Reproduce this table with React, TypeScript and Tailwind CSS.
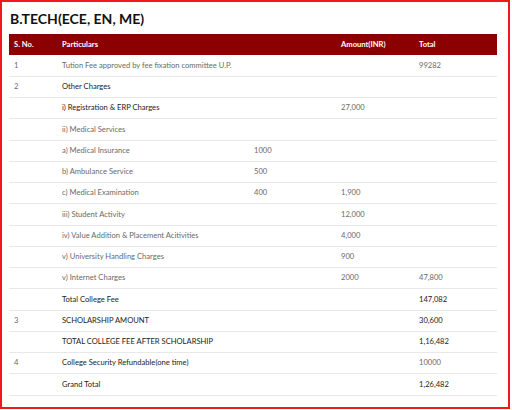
import React from 'react';

type Row = {
  sno?: string;
  label: string;
  sub?: string;
  amount?: string;
  total?: string;
  dark?: boolean;
  darkTotal?: boolean;
};

const rows: Row[] = [
  { sno: '1', label: 'Tution Fee approved by fee fixation committee U.P.', total: '99282' },
  { sno: '2', label: 'Other Charges', dark: true },
  { label: 'i) Registration & ERP Charges', amount: '27,000', dark: true },
  { label: 'ii) Medical Services' },
  { label: 'a) Medical Insurance', sub: '1000' },
  { label: 'b) Ambulance Service', sub: '500' },
  { label: 'c) Medical Examination', sub: '400', amount: '1,900' },
  { label: 'iii) Student Activity', amount: '12,000' },
  { label: 'iv) Value Addition & Placement Acitivities', amount: '4,000' },
  { label: 'v) University Handling Charges', amount: '900' },
  { label: 'v) Internet Charges', amount: '2000', total: '47,800' },
  { label: 'Total College Fee', total: '147,082', dark: true, darkTotal: true },
  { sno: '3', label: 'SCHOLARSHIP AMOUNT', total: '30,600', dark: true, darkTotal: true },
  { label: 'TOTAL COLLEGE FEE AFTER SCHOLARSHIP', total: '1,16,482', dark: true, darkTotal: true },
  { sno: '4', label: 'College Security Refundable(one time)', total: '10000', dark: true },
  { label: 'Grand Total', total: '1,26,482', dark: true, darkTotal: true },
];

export default function App() {
  return (
    <div className="w-[512px] h-[410px] bg-white" style={{ fontFamily: 'Lato, "Open Sans", sans-serif' }}>
      <div className="w-[510px] h-[409px] border-2 border-[#f01818] px-[7px] pt-[8px]">
        <h2 className="text-[14px] font-bold text-[#111] leading-[18px] pl-[1px]">B.TECH(ECE, EN, ME)</h2>
        <table className="mt-[6px] w-[488px] table-fixed border-collapse text-[7.6px] text-[#6a6a6a]">
          <colgroup>
            <col className="w-[48px]" />
            <col className="w-[192px]" />
            <col className="w-[87px]" />
            <col className="w-[78px]" />
            <col className="w-[83px]" />
          </colgroup>
          <thead>
            <tr className="bg-[#8b0000] text-white font-bold h-[21px]">
              <th className="text-left pl-[5px]">S. No.</th>
              <th className="text-left pl-[5px]">Particulars</th>
              <th></th>
              <th className="text-left pl-[5px]">Amount(INR)</th>
              <th className="text-left pl-[5px]">Total</th>
            </tr>
          </thead>
          <tbody>
            {rows.map((r, i) => (
              <tr key={i} className="h-[21.25px] border-b border-[#e8e8e8]">
                <td className="pl-[5px]">{r.sno}</td>
                <td className={r.dark ? 'pl-[5px] text-[#222]' : 'pl-[5px]'}>{r.label}</td>
                <td className="pl-[5px]">{r.sub}</td>
                <td className="pl-[5px]">{r.amount}</td>
                <td className={r.darkTotal ? 'pl-[5px] text-[#222]' : 'pl-[5px]'}>{r.total}</td>
              </tr>
            ))}
          </tbody>
        </table>
      </div>
    </div>
  );
}
